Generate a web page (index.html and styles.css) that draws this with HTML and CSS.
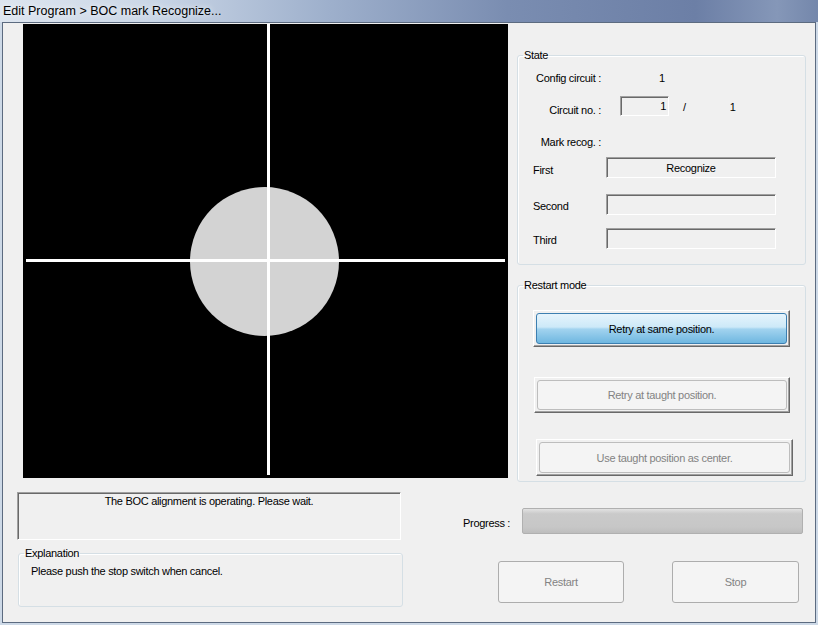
FILE: index.html
```html
<!DOCTYPE html>
<html lang="en">
<head>
    <meta charset="UTF-8">
    <title>Edit Program &gt; BOC mark Recognize...</title>
    <link rel="stylesheet" href="styles.css">
</head>
<body>

    <!-- Title bar -->
    <div class="titlebar">Edit Program &gt; BOC mark Recognize...</div>

    <div class="client">
        <div class="top-row">
            <!-- Camera view -->
            <svg class="camera" viewBox="0 0 485 454">
                <rect width="485" height="454" fill="#000"/>
                <circle cx="241.5" cy="237.5" r="74.5" fill="#d3d3d3"/>
                <rect x="244" y="0" width="3" height="451" fill="#fff" shape-rendering="crispEdges"/>
                <rect x="3" y="235" width="479" height="3" fill="#fff" shape-rendering="crispEdges"/>
            </svg>

            <div class="side">
                <fieldset class="group state">
                    <legend>State</legend>
                    <div class="row row-config">
                        <span class="lbl">Config circuit :</span>
                        <span class="val">1</span>
                    </div>
                    <div class="row row-circuit">
                        <span class="lbl">Circuit no. :</span>
                        <span class="num-box">1</span>
                        <span class="slash">/</span>
                        <span class="total">1</span>
                    </div>
                    <div class="row row-mark">
                        <span class="lbl">Mark recog. :</span>
                    </div>
                    <div class="recog first">
                        <span class="recog-lbl">First</span>
                        <span class="recog-box">Recognize</span>
                    </div>
                    <div class="recog second">
                        <span class="recog-lbl">Second</span>
                        <span class="recog-box"></span>
                    </div>
                    <div class="recog third">
                        <span class="recog-lbl">Third</span>
                        <span class="recog-box"></span>
                    </div>
                </fieldset>

                <fieldset class="group restart">
                    <legend>Restart mode</legend>
                    <button class="mode-btn active btn-same"><span>Retry at same position.</span></button>
                    <button class="mode-btn btn-taught"><span>Retry at taught position.</span></button>
                    <button class="mode-btn btn-center"><span>Use taught position as center.</span></button>
                </fieldset>
            </div>
        </div>

        <div class="bottom-row">
            <div class="messages">
                <div class="status">The BOC alignment is operating. Please wait.</div>
                <fieldset class="group explain">
                    <legend>Explanation</legend>
                    <p>Please push the stop switch when cancel.</p>
                </fieldset>
            </div>

            <div class="controls">
                <div class="progress-row">
                    <span class="progress-lbl">Progress :</span>
                    <div class="progress-bar"></div>
                </div>
                <div class="btn-row">
                    <button class="push-btn">Restart</button>
                    <button class="push-btn stop">Stop</button>
                </div>
            </div>
        </div>
    </div>

</body>
</html>
```

FILE: styles.css
```css
/* Window frame */
body {
    margin: 0;
    padding: 0;
    background-color: #cdd9e7;
    font-family: "Liberation Sans", Arial, sans-serif;
    font-size: 11px;
    letter-spacing: -0.3px;
    color: #000;
    overflow: hidden;
}

.titlebar {
    height: 22px;
    line-height: 22px;
    padding-left: 3px;
    font-size: 12.5px;
    letter-spacing: 0;
    background: linear-gradient(to right, #dde5ef 0%, #cbd7e7 18%, #9eb0cc 40%, #7a8db1 62%, #6c7fa6 85%, #8597b8 95%, #7487ab 100%);
    text-shadow: 0 0 6px #fff;
}

.client {
    box-sizing: border-box;
    height: 601px;
    margin: 0 2px;
    border: 1px solid #5c6b80;
    background-color: #f0f0f0;
}

/* Top part: camera + right side */
.top-row {
    display: flex;
    align-items: flex-start;
    height: 459px;
    padding-top: 1px;
    padding-left: 20px;
}

.camera {
    display: block;
    width: 485px;
    height: 454px;
    flex: none;
}

.side {
    width: 289px;
    margin-left: 9px;
    padding-top: 25px;
}

.group {
    margin: 0;
    padding: 0;
    min-width: 0;
    border: 1px solid #d5dfe5;
    border-radius: 3px;
    box-shadow: inset 1px 1px 0 #fff;
}

.group legend {
    margin-left: 5px;
    padding: 0 1px;
    line-height: 13px;
}

/* State box */
.state {
    padding-bottom: 15px;
}

.row {
    display: flex;
    align-items: flex-start;
    height: 14px;
    line-height: 14px;
}

.lbl {
    width: 83px;
    text-align: right;
    flex: none;
}

.row-config {
    margin-top: 9px;
}

.row-config .val {
    margin-left: 58px;
}

.row-circuit {
    margin-top: 11px;
    height: 20px;
}

.row-circuit .lbl {
    padding-top: 7px;
}

.num-box {
    box-sizing: border-box;
    width: 49px;
    height: 20px;
    margin-left: 19px;
    padding-right: 2px;
    line-height: 18px;
    text-align: right;
    border: 1px solid;
    border-color: #a0a0a0 #fff #fff #a0a0a0;
    box-shadow: inset 1px 1px 0 #696969;
}

.slash {
    margin-left: 14px;
    padding-top: 4px;
}

.total {
    margin-left: 44px;
    padding-top: 4px;
}

.row-mark {
    margin-top: 19px;
}

.recog {
    display: flex;
    height: 21px;
}

.recog-lbl {
    box-sizing: border-box;
    width: 88px;
    padding-left: 15px;
    line-height: 14px;
    padding-top: 5px;
}

.recog-box {
    box-sizing: border-box;
    width: 170px;
    height: 21px;
    line-height: 21px;
    text-align: center;
    border: 1px solid;
    border-color: #a0a0a0 #fff #fff #a0a0a0;
    box-shadow: inset 1px 1px 0 #696969;
}

.first {
    margin-top: 8px;
}

.first .recog-lbl {
    padding-top: 6px;
}

.second {
    margin-top: 16px;
}

.third {
    margin-top: 13px;
}

/* Restart mode box */
.restart {
    margin-top: 14px;
    padding-bottom: 5px;
}

.mode-btn {
    display: block;
    box-sizing: border-box;
    width: 257px;
    height: 37px;
    padding: 2px;
    border: 1px solid;
    border-color: #fff #696969 #696969 #fff;
    box-shadow: inset -1px -1px 0 #a0a0a0;
    background-color: #f0f0f0;
    font: inherit;
    letter-spacing: inherit;
}

.mode-btn span {
    display: flex;
    box-sizing: border-box;
    height: 100%;
    align-items: center;
    justify-content: center;
    border: 1px solid #bdbdbd;
    border-radius: 3px;
    background-color: #f4f4f4;
    color: #838383;
}

.mode-btn.active span {
    border-color: #3c7fb1;
    background: linear-gradient(#e6f4fc 0%, #cde9f8 45%, #a2d3ef 52%, #6fb7e0 100%);
    color: #000;
}

.btn-same {
    margin-top: 18px;
    margin-left: 15px;
}

.btn-taught {
    width: 256px;
    height: 36px;
    margin-top: 30px;
    margin-left: 16px;
}

.btn-center {
    margin-top: 26px;
    margin-left: 18px;
}

/* Bottom part */
.bottom-row {
    display: flex;
    margin-top: 9px;
}

.messages {
    width: 386px;
    margin-left: 14px;
}

.status {
    box-sizing: border-box;
    width: 384px;
    height: 48px;
    padding-top: 1px;
    line-height: 14px;
    text-align: center;
    border: 1px solid;
    border-color: #a0a0a0 #fff #fff #a0a0a0;
    box-shadow: inset 1px 1px 0 #696969;
}

.explain {
    width: 385px;
    box-sizing: border-box;
    margin-top: 7px;
    margin-left: 1px;
}

.explain p {
    margin: 4px 0 28px 12px;
    line-height: 14px;
}

.controls {
    flex: 1;
}

.progress-row {
    display: flex;
    margin-top: 16px;
    padding-left: 60px;
}

.progress-lbl {
    width: 59px;
    padding-top: 8px;
    line-height: 14px;
}

.progress-bar {
    box-sizing: border-box;
    width: 281px;
    height: 26px;
    border: 1px solid #b0b0b0;
    border-radius: 2px;
    background: linear-gradient(#e2e2e2 0%, #cacaca 20%, #c7c7c7 75%, #bdbdbd 100%);
}

.btn-row {
    display: flex;
    margin-top: 27px;
    margin-left: 95px;
}

.push-btn {
    box-sizing: border-box;
    width: 126px;
    height: 42px;
    padding: 0;
    border: 1px solid #adadad;
    border-radius: 3px;
    background-color: #f4f4f4;
    color: #838383;
    font: inherit;
    letter-spacing: inherit;
}

.push-btn.stop {
    width: 127px;
    margin-left: 48px;
}
```
